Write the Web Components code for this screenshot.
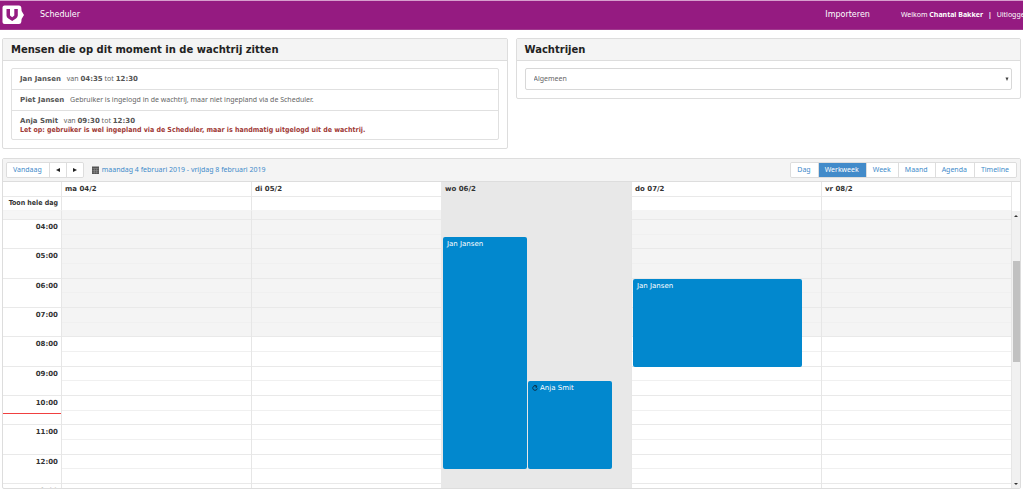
<!DOCTYPE html>
<html lang="nl">
<head>
<meta charset="utf-8">
<title>Scheduler</title>
<style>
  body { margin: 0; background: #fff; color: #333; font: 7px/10px "Noto Sans", "DejaVu Sans", sans-serif; --wide: "DejaVu Sans", sans-serif; --line: #ddd; --brand: #951b81; --link: #428bca; }
</style>
</head>
<body>
<scheduler-page></scheduler-page>

<template id="page-tpl">
  <style>
    :host { display: flex; flex-direction: column; min-height: 100vh; overflow: hidden; }
    .panels { display: grid; grid-template-columns: 1fr 1fr; gap: 8px; align-items: start; margin: 8px 2px 9px; }
    ul { list-style: none; margin: 0; padding: 0; border: 1px solid #e0e0e0; border-radius: 2px; color: #666; }
    li { padding: 5px 8px; border-top: 1px solid #e0e0e0; }
    li:first-child { border-top: 0; }
    b { font-family: var(--wide); line-height: 0; color: #555; }
    .name { margin-right: 4px; }
    .warn { display: block; margin-top: 1px; color: #a03a36; font-weight: bold; font-family: "DejaVu Sans Condensed", "Noto Sans", sans-serif; }
    .last { padding-bottom: 4px; line-height: 9px; }
    week-calendar { margin: 0 2px 1px; }
  </style>
  <app-header></app-header>
  <main>
    <div class="panels">
      <info-panel><span slot="title">Mensen die op dit moment in de wachtrij zitten</span>
        <ul>
          <li><b class="name">Jan Jansen</b> van <b>04:35</b> tot <b>12:30</b></li>
          <li><b class="name">Piet Jansen</b> Gebruiker is ingelogd in de wachtrij, maar niet ingepland via de Scheduler.</li>
          <li class="last"><b class="name">Anja Smit</b> van <b>09:30</b> tot <b>12:30</b><span class="warn">Let op: gebruiker is wel ingepland via de Scheduler, maar is handmatig uitgelogd uit de wachtrij.</span></li>
        </ul>
      </info-panel>
      <info-panel><span slot="title">Wachtrijen</span><queue-select></queue-select></info-panel>
    </div>
    <week-calendar></week-calendar>
  </main>
</template>

<template id="header-tpl">
  <style>
    :host { display: block; overflow: hidden; border-top: 1px solid #d79fce; background: var(--brand); }
    header { display: flex; align-items: center; height: 28px; margin-right: -6px; color: #fff; white-space: nowrap; border-bottom: 1px solid #a03a8e; }
    a { color: inherit; text-decoration: none; }
    svg { display: block; width: 22px; height: 20px; margin-left: 2px; }
    .nav { font: 8px/12px var(--wide); }
    .title { margin-left: 16px; }
    .import { margin-left: auto; }
    .user { margin-left: 31px; }
    .sep { margin: 0 3px; }
  </style>
  <header>
    <a href="#" aria-label="Home"><svg viewBox="0 0 22 20"><path fill="#fff" d="M2.500.500H17Q19 .5 19.300 2.500L19.600 6 22 10 19.600 14 19.300 17Q19 19 17 19H2.500Q.5 19 .5 17V2.500Q.5.5 2.500.5Z"/><path fill="#951b81" d="M4.500 4H8V10.500L10.200 12.300 12.300 10.500V4H15.800V10.500Q15.500 12.500 14 13.500L10.200 16 6.300 13.500Q4.500 12.500 4.500 10.500Z"/></svg></a>
    <a class="nav title" href="#">Scheduler</a>
    <a class="nav import" href="#">Importeren</a>
    <span class="user">Welkom <b>Chantal Bakker</b> <b class="sep">|</b> <a href="#">Uitloggen</a></span>
  </header>
</template>

<template id="panel-tpl">
  <style>
    :host { display: block; border: 1px solid var(--line); border-radius: 2px; }
    h2 { margin: 0; padding: 5px 8px 4px; background: #f4f4f4; border-bottom: 1px solid var(--line); font: bold 10px/12px var(--wide); color: #222; }
    div { padding: 7px 8px 8px; }
  </style>
  <h2><slot name="title"></slot></h2>
  <div><slot></slot></div>
</template>

<template id="select-tpl">
  <style>
    :host { display: block; position: relative; }
    select { display: block; appearance: none; width: 100%; height: 22px; margin: 0; padding: 0 8px; border: 1px solid #d8d8d8; border-radius: 2px; background: #fff; color: #666; font: inherit; }
    svg { position: absolute; right: 3px; top: 9px; width: 4px; height: 4px; pointer-events: none; }
  </style>
  <select aria-label="Wachtrij"><option>Algemeen</option></select>
  <svg viewBox="0 0 4 4"><path fill="#444" d="M.5 .5H3.500L2 4Z"/></svg>
</template>

<template id="toolbar-tpl">
  <style>
    :host { display: flex; align-items: center; padding: 3px; background: #f4f4f4; border-bottom: 1px solid var(--line); }
    .group { display: flex; border: 1px solid var(--line); border-radius: 2px; overflow: hidden; }
    button { height: 14px; margin: 0; padding: 0 7px 0 6px; border: 0; border-left: 1px solid var(--line); background: #fff; color: var(--link); font: inherit; }
    button:first-child { border-left: 0; }
    button[aria-pressed=true] { background: var(--link); color: #fff; }
    .arrow { width: 17px; padding: 0 6px; }
    .arrow svg { display: block; width: 4px; height: 4px; }
    .range { display: flex; align-items: center; gap: 3px; margin-left: 8px; color: var(--link); text-decoration: none; }
    .range svg { width: 7px; height: 8px; }
    .views { margin-left: auto; }
  </style>
  <div class="group">
    <button>Vandaag</button>
    <button class="arrow" aria-label="Vorige"><svg viewBox="0 0 4 4"><path fill="#222" d="M4 0V4L0 2Z"/></svg></button>
    <button class="arrow" aria-label="Volgende"><svg viewBox="0 0 4 4"><path fill="#222" d="M0 0V4L4 2Z"/></svg></button>
  </div>
  <a class="range" href="#"><svg viewBox="0 0 7 8"><path fill="#555" d="M0 .5H7V8H0Z"/><path stroke="#999" stroke-width=".5" d="M.5 2.500H6.500M.5 4.500H6.500M.5 6.200H6.500M2.400 2.500V7.500M4.600 2.500V7.500"/></svg>maandag 4 februari 2019 - vrijdag 8 februari 2019</a>
  <div class="group views">
    <button>Dag</button><button aria-pressed="true">Werkweek</button><button>Week</button><button>Maand</button><button>Agenda</button><button>Timeline</button>
  </div>
</template>

<template id="event-tpl">
  <style>
    :host { display: block; position: absolute; box-sizing: border-box; padding: 2px 4px; border-radius: 2px; background: #0288ce; color: #fff; font-family: var(--wide); line-height: 11px; overflow: hidden; white-space: nowrap; }
    svg { display: none; width: 6px; height: 6px; margin-right: 2px; vertical-align: -1px; }
    :host([recurring]) svg { display: inline-block; }
  </style>
  <svg viewBox="0 0 6 6"><path fill="none" stroke="#0c2f45" d="M4.800 1.500A2.300 2.300 0 1 0 5.300 3.500M2.500.5L4.800 1.200 4 3"/></svg><slot></slot>
</template>

<template id="calendar-tpl">
  <style>
    :host { display: block; border: 1px solid var(--line); border-radius: 2px; overflow: hidden; }
    .head { display: grid; grid-template-columns: 58px repeat(5, 1fr); grid-template-rows: 15px 14px; margin-right: 8px; font: bold 7px/15px var(--wide); border-right: 1px solid #e6e6e6; }
    .head div { padding: 0 3px; border-left: 1px solid #e6e6e6; border-bottom: 1px solid #e9e9e9; }
    .head div:nth-child(6n + 1) { border-left: 0; text-align: right; }
    .head .allday { border-bottom-color: #f4f4f4; font-family: "DejaVu Sans Condensed", "Noto Sans", sans-serif; line-height: 13px; white-space: nowrap; }
    .head .today { background: #e8e8e8; border-color: #e8e8e8; }
    .body { display: grid; grid-template-columns: 1fr 8px; }
    .times { display: grid; grid-template-columns: 58px repeat(5, 1fr); height: 277px; border-right: 1px solid #e6e6e6; }
    .col { position: relative; display: grid; grid-template-rows: 9px repeat(9, 1fr) 4px; min-height: 0; overflow: hidden; border-left: 1px solid #e6e6e6; }
    .col i { box-sizing: border-box; min-height: 0; border-bottom: 1px solid #e9e9e9; background: linear-gradient(#f0f0f0, #f0f0f0) 0 50% / 100% 1px no-repeat; }
    .col .off { background-color: #f4f4f4; }
    .col i:first-child { background-image: none; }
    .col i:nth-child(11) { border-bottom: 0; background: none; }
    .today-col { background: #e8e8e8; border-color: #e8e8e8; }
    .today-col i { visibility: hidden; }
    .layer { position: absolute; inset: 9px 10% 4px 0; margin: 0 -1px 0 1px; }
    .hours { border-left: 0; font: bold 7px/15px var(--wide); text-align: right; }
    .col.hours i { font-style: normal; padding-right: 3px; background: none; }
    .col.hours i:first-child { background: #f6f6f6; }
    .now { position: absolute; left: 0; right: 0; top: 73%; height: 1px; background: #f04040; }
    .bar { display: grid; grid-template-rows: 9px 41px 101px 1fr 9px; justify-items: center; align-items: center; background: #f1f1f1; }
    .bar svg { width: 4px; height: 4px; }
    .thumb { align-self: stretch; width: 7px; background: #c1c1c1; grid-row: 3; }
    .down { grid-row: 5; }
  </style>
  <calendar-toolbar></calendar-toolbar>
  <div class="head"></div>
  <div class="body">
    <div class="times"></div>
    <div class="bar"><svg viewBox="0 0 4 4"><path fill="#333" d="M0 3L2 1 4 3Z"/></svg><div class="thumb"></div><svg class="down" viewBox="0 0 4 4"><path fill="#333" d="M0 1L2 3 4 1Z"/></svg></div>
  </div>
</template>

<script>
  class TemplateElement extends HTMLElement {
    constructor() {
      super();
      this.attachShadow({ mode: 'open' }).append(document.getElementById(this.constructor.tpl).content.cloneNode(true));
    }
  }
  const define = (name, tpl) => customElements.define(name, class extends TemplateElement { static tpl = tpl; });
  define('app-header', 'header-tpl');
  define('info-panel', 'panel-tpl');
  define('queue-select', 'select-tpl');
  define('calendar-toolbar', 'toolbar-tpl');

  const FIRST_HOUR = 4, HOURS = 9;
  customElements.define('calendar-event', class extends TemplateElement {
    static tpl = 'event-tpl';
    connectedCallback() {
      const pos = t => { const [h, m] = t.split(':').map(Number); return (h + m / 60 - FIRST_HOUR) / HOURS * 100; };
      const start = pos(this.getAttribute('from')), end = pos(this.getAttribute('to'));
      const lanes = Number(this.getAttribute('lanes') || 1), lane = Number(this.getAttribute('lane') || 0);
      Object.assign(this.style, { top: start + '%', height: (end - start) + '%', left: lane * 100 / lanes + '%', width: `calc(${100 / lanes}% - 1px)` });
    }
  });

  customElements.define('week-calendar', class extends TemplateElement {
    static tpl = 'calendar-tpl';
    connectedCallback() {
      const days = ['ma 04/2', 'di 05/2', 'wo 06/2', 'do 07/2', 'vr 08/2'], today = 2;
      const events = {
        2: '<calendar-event from="04:35" to="12:30" lanes="2">Jan Jansen</calendar-event><calendar-event from="09:30" to="12:30" lanes="2" lane="1" recurring>Anja Smit</calendar-event>',
        3: '<calendar-event from="06:00" to="09:00">Jan Jansen</calendar-event>'
      };
      const cls = i => i === today ? 'today' : '';
      this.shadowRoot.querySelector('.head').innerHTML =
        '<div></div>' + days.map((d, i) => `<div class="${cls(i)}">${d}</div>`).join('') +
        '<div class="allday">Toon hele dag</div>' + days.map((d, i) => `<div class="allday ${cls(i)}"></div>`).join('');
      let hours = '<i></i>', slots = '<i class="off"></i>';
      for (let h = FIRST_HOUR; h <= FIRST_HOUR + HOURS; h++) {
        hours += `<i>${String(h).padStart(2, '0')}:00</i>`;
        slots += `<i class="${h < 8 ? 'off' : ''}"></i>`;
      }
      this.shadowRoot.querySelector('.times').innerHTML =
        `<div class="col hours">${hours}<span class="now"></span></div>` +
        days.map((d, i) => `<div class="col ${i === today ? 'today-col' : ''}">${slots}<div class="layer">${events[i] || ''}</div></div>`).join('');
    }
  });
  define('scheduler-page', 'page-tpl');
</script>
</body>
</html>
